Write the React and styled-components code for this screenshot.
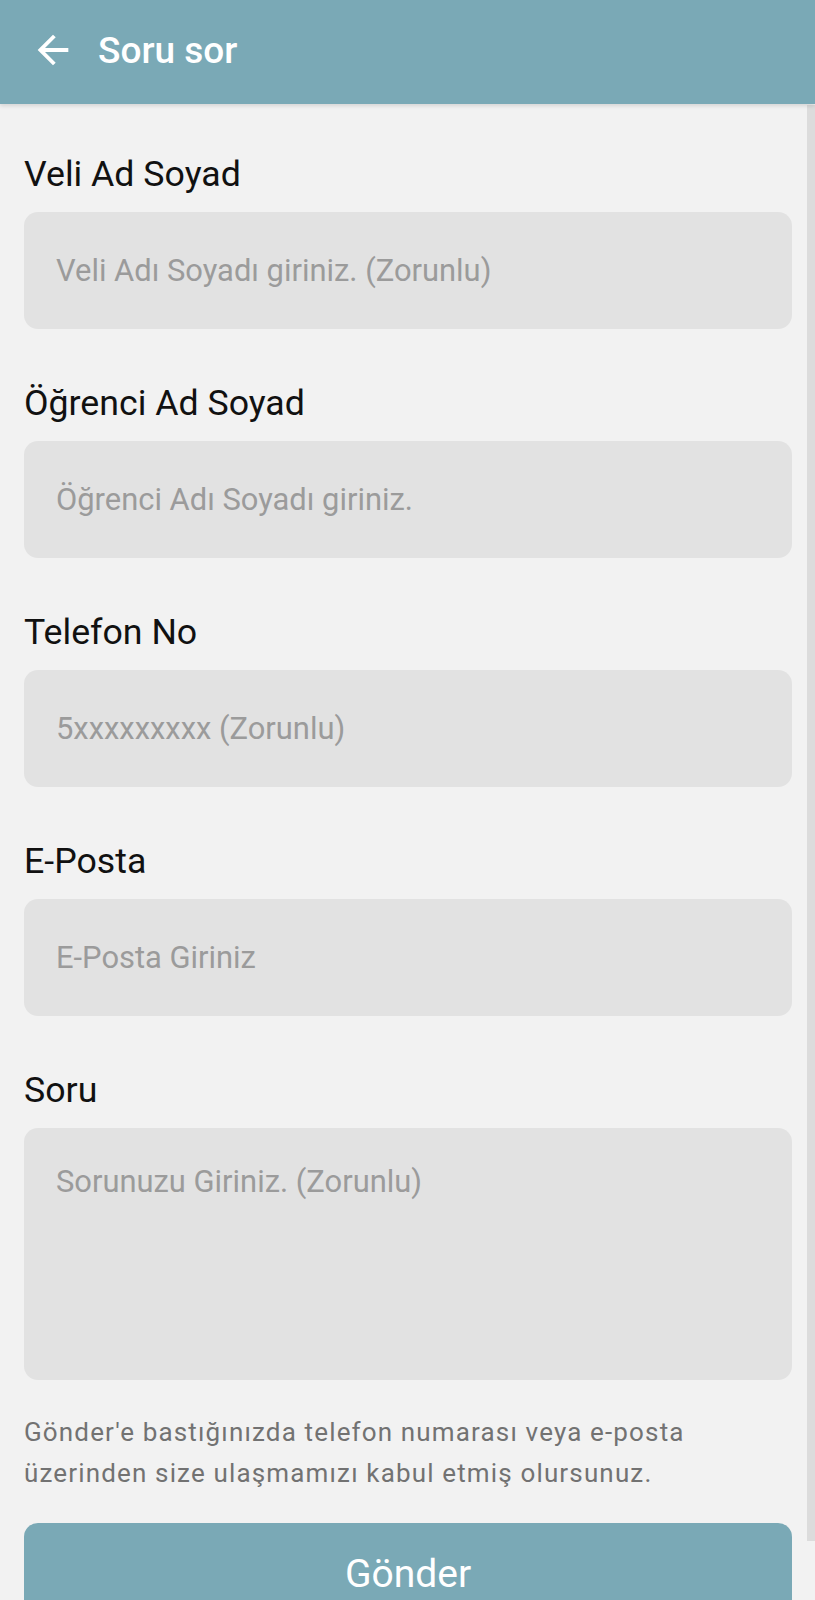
import styled, { createGlobalStyle } from "styled-components";

const GlobalStyle = createGlobalStyle`
  html, body {
    margin: 0;
    padding: 0;
    overflow: hidden;
    background: #f2f2f2;
  }
  * {
    box-sizing: border-box;
  }
`;

const fields = [
  { label: "Veli Ad Soyad", placeholder: "Veli Adı Soyadı giriniz. (Zorunlu)" },
  { label: "Öğrenci Ad Soyad", placeholder: "Öğrenci Adı Soyadı giriniz." },
  { label: "Telefon No", placeholder: "5xxxxxxxxx (Zorunlu)" },
  { label: "E-Posta", placeholder: "E-Posta Giriniz" },
];

const App = () => {
  return (
    <Screen>
      <GlobalStyle />
      <Header>
        <BackButton aria-label="Geri">
          <svg viewBox="0 0 24 24" width="46" height="46" fill="#ffffff">
            <path d="M20 11H7.83l5.59-5.59L12 4l-8 8 8 8 1.41-1.41L7.83 13H20v-2z" />
          </svg>
        </BackButton>
        <Title>Soru sor</Title>
      </Header>

      <Form>
        {fields.map((f) => (
          <Field key={f.label}>
            <Label>{f.label}</Label>
            <Input placeholder={f.placeholder} />
          </Field>
        ))}
        <Field>
          <Label>Soru</Label>
          <TextArea placeholder="Sorunuzu Giriniz. (Zorunlu)" />
        </Field>

        <Notice>
          Gönder'e bastığınızda telefon numarası veya e-posta
          <br />
          üzerinden size ulaşmamızı kabul etmiş olursunuz.
        </Notice>

        <SubmitButton>Gönder</SubmitButton>
      </Form>

      <ScrollIndicator />
    </Screen>
  );
};

const Screen = styled.div`
  position: relative;
  width: 815px;
  height: 1600px;
  overflow: hidden;
  background: #f2f2f2;
  font-family: Roboto, "Noto Sans", sans-serif;
`;

const Header = styled.header`
  position: relative;
  z-index: 2;
  height: 104px;
  background: #7aa9b6;
  display: flex;
  align-items: center;
  padding-left: 30px;
  box-shadow: 0 2px 4px rgba(0, 0, 0, 0.12);
`;

const BackButton = styled.div`
  width: 46px;
  height: 46px;
  display: flex;
  align-items: center;
  justify-content: center;
  margin-top: -4px;

  svg {
    display: block;
  }
`;

const Title = styled.h1`
  margin: -4px 0 0 22px;
  color: #ffffff;
  font-size: 37px;
  font-weight: 500;
`;

const Form = styled.div`
  display: flex;
  flex-direction: column;
  padding: 49px 23px 0 24px;
`;

const Field = styled.div`
  display: flex;
  flex-direction: column;
  gap: 17px;
  margin-bottom: 53px;

  &:nth-of-type(5) {
    margin-bottom: 32px;
  }
`;

const Label = styled.label`
  font-size: 35.7px;
  line-height: 42px;
  color: #111111;
`;

const inputBase = `
  width: 100%;
  border: none;
  outline: none;
  background: #e2e2e2;
  border-radius: 14px;
  font-family: Roboto, "Noto Sans", sans-serif;
  font-size: 30.9px;
  color: #333;
  padding: 0 32px;

  &::placeholder {
    color: #9b9b9b;
  }
`;

const Input = styled.input`
  ${inputBase}
  height: 117px;
`;

const TextArea = styled.textarea`
  ${inputBase}
  height: 252px;
  padding-top: 36px;
  line-height: 36px;
  resize: none;
`;

const Notice = styled.p`
  margin: 0 0 29px;
  font-size: 26px;
  line-height: 41px;
  letter-spacing: 1.15px;
  color: #727272;
`;

const SubmitButton = styled.button`
  height: 102px;
  width: 100%;
  border: none;
  border-radius: 14px;
  background: #7aa9b6;
  color: #ffffff;
  font-family: Roboto, "Noto Sans", sans-serif;
  font-size: 39px;
  padding: 0 0 0;
`;

const ScrollIndicator = styled.div`
  position: absolute;
  top: 105px;
  right: 0;
  width: 8px;
  height: 1436px;
  background: #dcdcdc;
`;

export default App;
